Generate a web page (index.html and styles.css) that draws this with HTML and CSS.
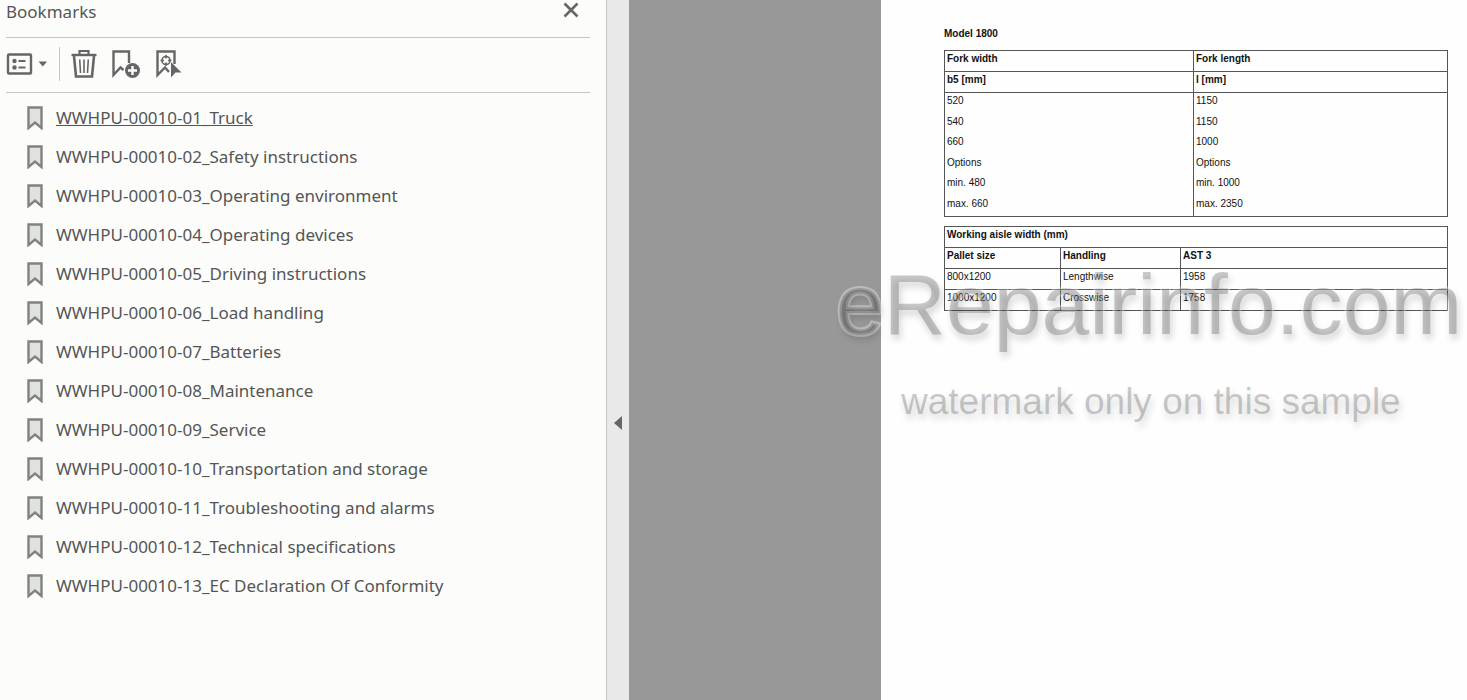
FILE: index.html
```
<!DOCTYPE html>
<html lang="en">
<head>
  <meta charset="UTF-8">
  <title>Bookmarks</title>
  <link rel="stylesheet" href="styles.css">
</head>
<body>
  <!-- shapes shared by the bookmark icons -->
  <svg class="defs" aria-hidden="true">
    <symbol id="mark" viewBox="0 0 16 24">
      <path d="M1.5 1.5h13v20.5L8 16.5 1.5 22z" fill="#e0e2e0" stroke="#808280" stroke-width="2.4"/>
    </symbol>
  </svg>

  <div class="app">
    <aside class="sidebar">
      <header class="panel-header">
        <h1>Bookmarks</h1>
        <button class="close" aria-label="Close">
          <svg width="16" height="16" viewBox="0 0 16 16"><path d="M1.5 1.5l13 13M14.5 1.5l-13 13" stroke="#666" stroke-width="2.6"/></svg>
        </button>
      </header>

      <div class="toolbar">
        <button class="options" aria-label="Options">
          <svg width="42" height="24" viewBox="0 0 42 24">
            <rect x="2" y="2.5" width="23" height="19" rx="1" fill="none" stroke="#666" stroke-width="2.4"/>
            <circle cx="8.5" cy="9" r="2.2" fill="#666"/>
            <circle cx="8.5" cy="15.5" r="2.2" fill="#666"/>
            <path d="M12.5 9h7M12.5 15.5h7" stroke="#666" stroke-width="2.2"/>
            <path d="M32.5 9.5h8.5l-4.2 5z" fill="#666"/>
          </svg>
        </button>
        <span class="divider"></span>
        <button class="delete" aria-label="Delete bookmark">
          <svg width="26" height="30" viewBox="0 0 26 30" fill="none" stroke="#666">
            <path d="M0.5 6h25" stroke-width="2.4"/>
            <path d="M8.5 5V2h9v3" stroke-width="2.2"/>
            <path d="M3 7l2 20.5h16L23 7" stroke-width="2.6"/>
            <path d="M8.7 10.5l.8 13.5M13 10.5V24M17.3 10.5L16.5 24" stroke-width="1.6"/>
          </svg>
        </button>
        <button class="add" aria-label="New bookmark">
          <svg width="30" height="30" viewBox="0 0 30 30">
            <path d="M12.5 21l-3-2.5L2.5 26V2.5h15.5V14" fill="none" stroke="#666" stroke-width="2.4"/>
            <circle cx="21.5" cy="21.5" r="7.5" fill="#666"/>
            <path d="M17 21.5h9M21.5 17v9" stroke="#fcfdfb" stroke-width="2.4"/>
          </svg>
        </button>
        <button class="find" aria-label="Find current bookmark">
          <svg width="28" height="30" viewBox="0 0 28 30">
            <path d="M14 23l-4-4.5L2.5 26V2.5h17V15" fill="none" stroke="#666" stroke-width="2.4"/>
            <circle cx="11" cy="11.5" r="4" fill="none" stroke="#666" stroke-width="1.6"/>
            <path d="M11 6v3.5M11 13.5V17M5.5 11.5H9M13 11.5h3.5" stroke="#666" stroke-width="1.6"/>
            <path d="M16 13l10.5 10.5h-6L16 28.5z" fill="#666"/>
          </svg>
        </button>
      </div>

      <ul class="bookmarks">
        <li><svg><use href="#mark"/></svg><a class="current" href="#">WWHPU-00010-01_Truck</a></li>
        <li><svg><use href="#mark"/></svg><a href="#">WWHPU-00010-02_Safety instructions</a></li>
        <li><svg><use href="#mark"/></svg><a href="#">WWHPU-00010-03_Operating environment</a></li>
        <li><svg><use href="#mark"/></svg><a href="#">WWHPU-00010-04_Operating devices</a></li>
        <li><svg><use href="#mark"/></svg><a href="#">WWHPU-00010-05_Driving instructions</a></li>
        <li><svg><use href="#mark"/></svg><a href="#">WWHPU-00010-06_Load handling</a></li>
        <li><svg><use href="#mark"/></svg><a href="#">WWHPU-00010-07_Batteries</a></li>
        <li><svg><use href="#mark"/></svg><a href="#">WWHPU-00010-08_Maintenance</a></li>
        <li><svg><use href="#mark"/></svg><a href="#">WWHPU-00010-09_Service</a></li>
        <li><svg><use href="#mark"/></svg><a href="#">WWHPU-00010-10_Transportation and storage</a></li>
        <li><svg><use href="#mark"/></svg><a href="#">WWHPU-00010-11_Troubleshooting and alarms</a></li>
        <li><svg><use href="#mark"/></svg><a href="#">WWHPU-00010-12_Technical specifications</a></li>
        <li><svg><use href="#mark"/></svg><a href="#">WWHPU-00010-13_EC Declaration Of Conformity</a></li>
      </ul>
    </aside>

    <button class="splitter" aria-label="Collapse panel">
      <svg width="8" height="14" viewBox="0 0 8 14"><path d="M8 0v14L0 7z" fill="#666"/></svg>
    </button>

    <main class="viewer">
      <article class="page">
        <h2>Model 1800</h2>
        <table class="forks">
          <thead>
            <tr><th>Fork width</th><th>Fork length</th></tr>
            <tr><th>b5 [mm]</th><th>l [mm]</th></tr>
          </thead>
          <tbody>
            <tr><td>520</td><td>1150</td></tr>
            <tr><td>540</td><td>1150</td></tr>
            <tr><td>660</td><td>1000</td></tr>
            <tr><td>Options</td><td>Options</td></tr>
            <tr><td>min. 480</td><td>min. 1000</td></tr>
            <tr><td>max. 660</td><td>max. 2350</td></tr>
          </tbody>
        </table>

        <table class="aisles">
          <colgroup><col class="pallet"><col class="handling"><col></colgroup>
          <thead>
            <tr><th colspan="3">Working aisle width (mm)</th></tr>
            <tr><th>Pallet size</th><th>Handling</th><th>AST 3</th></tr>
          </thead>
          <tbody>
            <tr><td>800x1200</td><td>Lengthwise</td><td>1958</td></tr>
            <tr><td>1000x1200</td><td>Crosswise</td><td>1758</td></tr>
          </tbody>
        </table>
      </article>

      <div class="watermark">
        <p class="site">eRepairinfo.com</p>
        <p class="note">watermark only on this sample</p>
      </div>
    </main>
  </div>
</body>
</html>
```
FILE: styles.css
```
* {
  box-sizing: border-box;
}
body {
  margin: 0;
  font-family: "Noto Sans", "Open Sans", sans-serif;
  color: #555;
}
.defs {
  position: absolute;
  width: 0;
  height: 0;
}
button {
  display: flex;
  padding: 0;
  border: 0;
  background: none;
}
.app {
  display: flex;
  min-height: 100vh;
}

/* bookmarks panel */
.sidebar {
  flex: 0 0 606px;
  padding: 0 16px 0 6px;
  background: #fcfdfb;
}
.panel-header {
  display: flex;
  justify-content: space-between;
  height: 38px;
  padding-right: 11px;
  border-bottom: 1px solid #c4c5c3;
}
.panel-header h1 {
  margin: 0;
  font-size: 17px;
  font-weight: 400;
  line-height: 24px;
}
.close {
  align-self: flex-start;
  margin-top: 2px;
}
.toolbar {
  display: flex;
  align-items: center;
  height: 55px;
  padding-bottom: 2px;
  border-bottom: 1px solid #c4c5c3;
}
.divider {
  width: 1px;
  height: 34px;
  margin: 0 11px;
  background: #c4c5c3;
}
.add,
.find {
  margin-left: 14px;
}
.bookmarks {
  margin: 0;
  padding: 5px 0 0 21px;
  list-style: none;
}
.bookmarks li {
  display: flex;
  align-items: center;
  height: 39px;
}
.bookmarks svg {
  width: 16px;
  height: 24px;
  margin-right: 13px;
}
.bookmarks a {
  color: #555;
  font-size: 17px;
  line-height: 24px;
  text-decoration: none;
}
.bookmarks .current {
  text-decoration: underline;
}

.splitter {
  flex: 0 0 23px;
  justify-content: center;
  padding-top: 416px;
  border-left: 1px solid #c8c8c8;
  background: #e9e9e9;
}

/* document */
.viewer {
  position: relative;
  flex: 1;
  display: flex;
  padding-left: 252px;
  overflow: hidden;
  background: #989898;
}
.page {
  flex: 1;
  padding: 28px 19px 28px 63px;
  background: #fefefe;
  color: #111;
  font-family: "Liberation Sans", Arial, sans-serif;
  font-size: 10px;
}
.page h2 {
  margin: 0 0 10px;
  font-size: 10px;
  line-height: 12px;
}
.page table {
  width: 100%;
  margin-bottom: 9px;
  border: 1px solid #555;
  border-collapse: collapse;
  table-layout: fixed;
}
.page th,
.page td {
  height: 21px;
  padding: 2px 2px 6px;
  border: 1px solid #555;
  line-height: 12px;
  text-align: left;
}
.forks th:first-child {
  width: 249px;
}
.page .forks tbody td {
  height: 20px;
  border-top: 0;
  border-bottom: 0;
}
.page .forks tbody tr:nth-child(odd) td {
  height: 21px;
}
.pallet {
  width: 116px;
}
.handling {
  width: 120px;
}

/* lies over the page and the grey beside it */
.watermark {
  position: absolute;
  top: 256px;
  left: 207px;
  color: rgba(70, 70, 70, 0.28);
  font-family: "Liberation Sans", Arial, sans-serif;
  white-space: nowrap;
  pointer-events: none;
}
.watermark p {
  margin: 0;
  paint-order: stroke fill;
  -webkit-text-stroke: 4px rgba(255, 255, 255, 0.35);
  text-shadow: 2px 5px 7px rgba(0, 0, 0, 0.16);
}
.watermark .site {
  font-size: 86px;
  line-height: 96px;
}
.watermark .note {
  padding: 28px 0 0 65px;
  font-size: 37px;
  line-height: 44px;
}
```
